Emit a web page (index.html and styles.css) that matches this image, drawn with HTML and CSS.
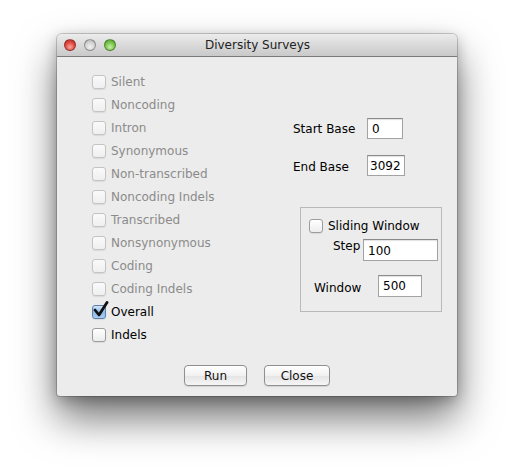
FILE: index.html
```html
<!DOCTYPE html>
<html lang="en">
<head>
    <meta charset="UTF-8">
    <title>Diversity Surveys</title>
    <link rel="stylesheet" href="styles.css">
</head>
<body>
    <div class="window">
        <!-- Title bar -->
        <div class="titlebar">
            <div class="lights">
                <span class="light red"></span>
                <span class="light gray"></span>
                <span class="light green"></span>
            </div>
            <div class="title">Diversity Surveys</div>
        </div>

        <div class="content">
            <div class="main">
                <!-- Survey types -->
                <div class="checks">
                    <label class="check disabled"><span class="box"></span>Silent</label>
                    <label class="check disabled"><span class="box"></span>Noncoding</label>
                    <label class="check disabled"><span class="box"></span>Intron</label>
                    <label class="check disabled"><span class="box"></span>Synonymous</label>
                    <label class="check disabled"><span class="box"></span>Non-transcribed</label>
                    <label class="check disabled"><span class="box"></span>Noncoding Indels</label>
                    <label class="check disabled"><span class="box"></span>Transcribed</label>
                    <label class="check disabled"><span class="box"></span>Nonsynonymous</label>
                    <label class="check disabled"><span class="box"></span>Coding</label>
                    <label class="check disabled"><span class="box"></span>Coding Indels</label>
                    <label class="check"><span class="box checked"><svg viewBox="0 0 17 17" width="17" height="17"><path d="M3 9 L7 14 L15 1.5" fill="none" stroke="#111" stroke-width="2.8" stroke-linecap="round" stroke-linejoin="round"/></svg></span>Overall</label>
                    <label class="check"><span class="box"></span>Indels</label>
                </div>

                <!-- Range and window -->
                <div class="params">
                    <div class="field-row">
                        <span class="field-label">Start Base</span>
                        <span class="field w36">0</span>
                    </div>
                    <div class="field-row second">
                        <span class="field-label">End Base</span>
                        <span class="field w38">3092</span>
                    </div>
                    <div class="group">
                        <label class="check"><span class="box"></span>Sliding Window</label>
                        <div class="step-row">
                            <span class="step-label">Step</span>
                            <span class="field w75">100</span>
                        </div>
                        <div class="win-row">
                            <span class="win-label">Window</span>
                            <span class="field w44">500</span>
                        </div>
                    </div>
                </div>
            </div>

            <div class="buttons">
                <button class="btn run">Run</button>
                <button class="btn close">Close</button>
            </div>
        </div>
    </div>
</body>
</html>
```

FILE: styles.css
```css
html, body { margin: 0; padding: 0; }
body {
    background: #ffffff;
    font-family: "DejaVu Sans", sans-serif;
    font-size: 12px;
    color: #000;
    width: 514px;
    height: 475px;
    overflow: hidden;
}

.window {
    margin: 34px 0 0 57px;
    width: 400px;
    height: 362px;
    background: #ececec;
    border-radius: 5px 5px 3px 3px;
    box-shadow: 0 22px 40px rgba(0, 0, 0, 0.55), 0 0 0 1px rgba(0, 0, 0, 0.18), 0 4px 14px rgba(0, 0, 0, 0.25);
    overflow: hidden;
}

/* title bar */
.titlebar {
    height: 22px;
    border-bottom: 1px solid #7a7a7a;
    background: linear-gradient(#ececec, #d6d6d6 60%, #c9c9c9);
    display: flex;
    align-items: center;
}
.lights { display: flex; gap: 8px; margin-left: 7px; }
.light {
    width: 12px;
    height: 12px;
    border-radius: 50%;
    box-sizing: border-box;
    border: 1px solid rgba(0, 0, 0, 0.3);
}
.light.red { background: radial-gradient(circle at 50% 70%, #f8a6a0, #e0473d 55%, #b12a22); }
.light.gray { background: radial-gradient(circle at 50% 70%, #f2f2f2, #d2d2d2 55%, #a9a9a9); }
.light.green { background: radial-gradient(circle at 50% 70%, #c7efa8, #77c24a 55%, #4e9a2c); }
.title {
    flex: 1;
    text-align: center;
    margin-left: -58px;
    font-size: 12px;
    color: #222;
}

.content { height: 339px; display: flex; flex-direction: column; }
.main { height: 308px; display: flex; }

/* checkboxes */
.checks {
    width: 236px;
    padding: 13px 0 0 35px;
    box-sizing: border-box;
}
.check {
    height: 23px;
    display: flex;
    align-items: center;
    gap: 5px;
    white-space: nowrap;
}
.check.disabled { color: #8b8b8b; }
.box {
    width: 14px;
    height: 14px;
    box-sizing: border-box;
    border: 1px solid #9c9c9c;
    border-radius: 3px;
    background: linear-gradient(#ffffff, #ededed);
    box-shadow: 0 1px 1px rgba(0, 0, 0, 0.08);
    position: relative;
    flex: none;
}
.disabled .box { border-color: #c4c4c4; background: linear-gradient(#fafafa, #efefef); }
.box.checked {
    border-color: #5a7fa8;
    background: linear-gradient(#d3e6fb, #8fb9ea 50%, #a9cdf5);
}
.box.checked svg { position: absolute; left: -1px; top: -5px; }

/* right side */
.params { padding-top: 61px; }
.field-row { display: flex; align-items: center; height: 21px; }
.field-row.second { margin-top: 16px; }
.field-row.second .field-label { padding-top: 2px; }
.field-label { width: 74px; }
.field {
    height: 21px;
    box-sizing: border-box;
    border: 1px solid #a3a3a3;
    border-top-color: #8a8a8a;
    background: #fff;
    box-shadow: inset 0 1px 1px rgba(0, 0, 0, 0.12);
    padding: 2px 0 0 4px;
    font-size: 12px;
    line-height: 16px;
}
.w36 { width: 36px; }
.w38 { width: 38px; padding-left: 2px; }
.w75 { width: 75px; height: 22px; padding-top: 3px; }
.w44 { width: 44px; height: 22px; padding-top: 2px; }

.group {
    margin: 31px 0 0 7px;
    width: 142px;
    height: 105px;
    box-sizing: border-box;
    border: 1px solid #b9b9b9;
    padding: 6px 0 0 8px;
}
.group .check { height: 23px; }
.step-row { display: flex; margin-top: 2px; padding-left: 24px; }
.step-label { width: 30px; }
.win-row { display: flex; align-items: center; margin-top: 14px; padding-left: 5px; }
.win-label { width: 64px; padding-top: 4px; }

/* buttons */
.buttons { display: flex; justify-content: center; gap: 17px; }
.btn {
    height: 21px;
    box-sizing: border-box;
    border: 1px solid #8f8f8f;
    border-radius: 4px;
    background: linear-gradient(#ffffff, #f1f1f1 50%, #e4e4e4 51%, #f6f6f6);
    font-family: "DejaVu Sans", sans-serif;
    font-size: 12px;
    color: #111;
    padding: 0;
    box-shadow: 0 1px 1px rgba(0, 0, 0, 0.1);
}
.btn.run { width: 63px; }
.btn.close { width: 66px; }
```
